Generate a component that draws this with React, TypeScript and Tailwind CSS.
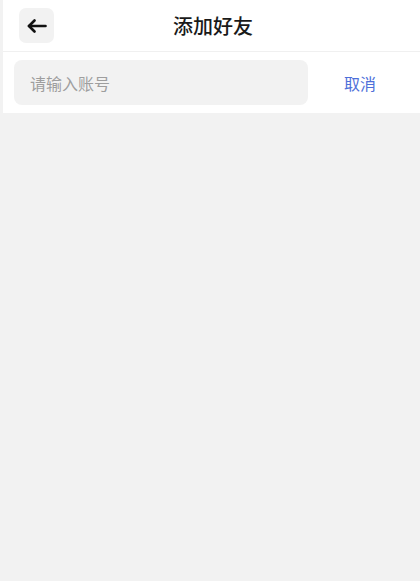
export default function App() {
  return (
    <div
      className="min-h-[581px] bg-[#f2f2f2] pl-[3px]"
      style={{ fontFamily: '"Noto Sans CJK SC", "Noto Sans", sans-serif' }}
    >
      <header className="h-[52px] bg-white border-b border-[#f0f0f0] flex items-center relative">
        <button className="ml-[16px] w-[35px] h-[35px] rounded-[7px] bg-[#f2f2f2] flex items-center justify-center text-[#111]">
          <svg width="20" height="14" viewBox="0 0 20 14" fill="none" stroke="currentColor" strokeWidth="2.6" strokeLinecap="round" strokeLinejoin="round">
            <path d="M18.5 7H2" />
            <path d="M7.5 1.5L2 7l5.5 5.5" />
          </svg>
        </button>
        <h1 className="absolute left-0 right-0 text-center text-[20px] font-medium text-[#1a1a1a] pointer-events-none pl-[3px]">
          添加好友
        </h1>
      </header>

      <div className="h-[61px] bg-white flex items-center pl-[11px]">
        <div className="flex-1 h-[45px] rounded-[8px] bg-[#f2f2f2] flex items-center pl-[16px]">
          <input
            className="w-full bg-transparent outline-none text-[16px] text-[#333] placeholder:text-[#9e9e9e]"
            placeholder="请输入账号"
          />
        </div>
        <button className="ml-[36px] mr-[44px] text-[16px] text-[#4e6fd9]">取消</button>
      </div>
    </div>
  );
}
